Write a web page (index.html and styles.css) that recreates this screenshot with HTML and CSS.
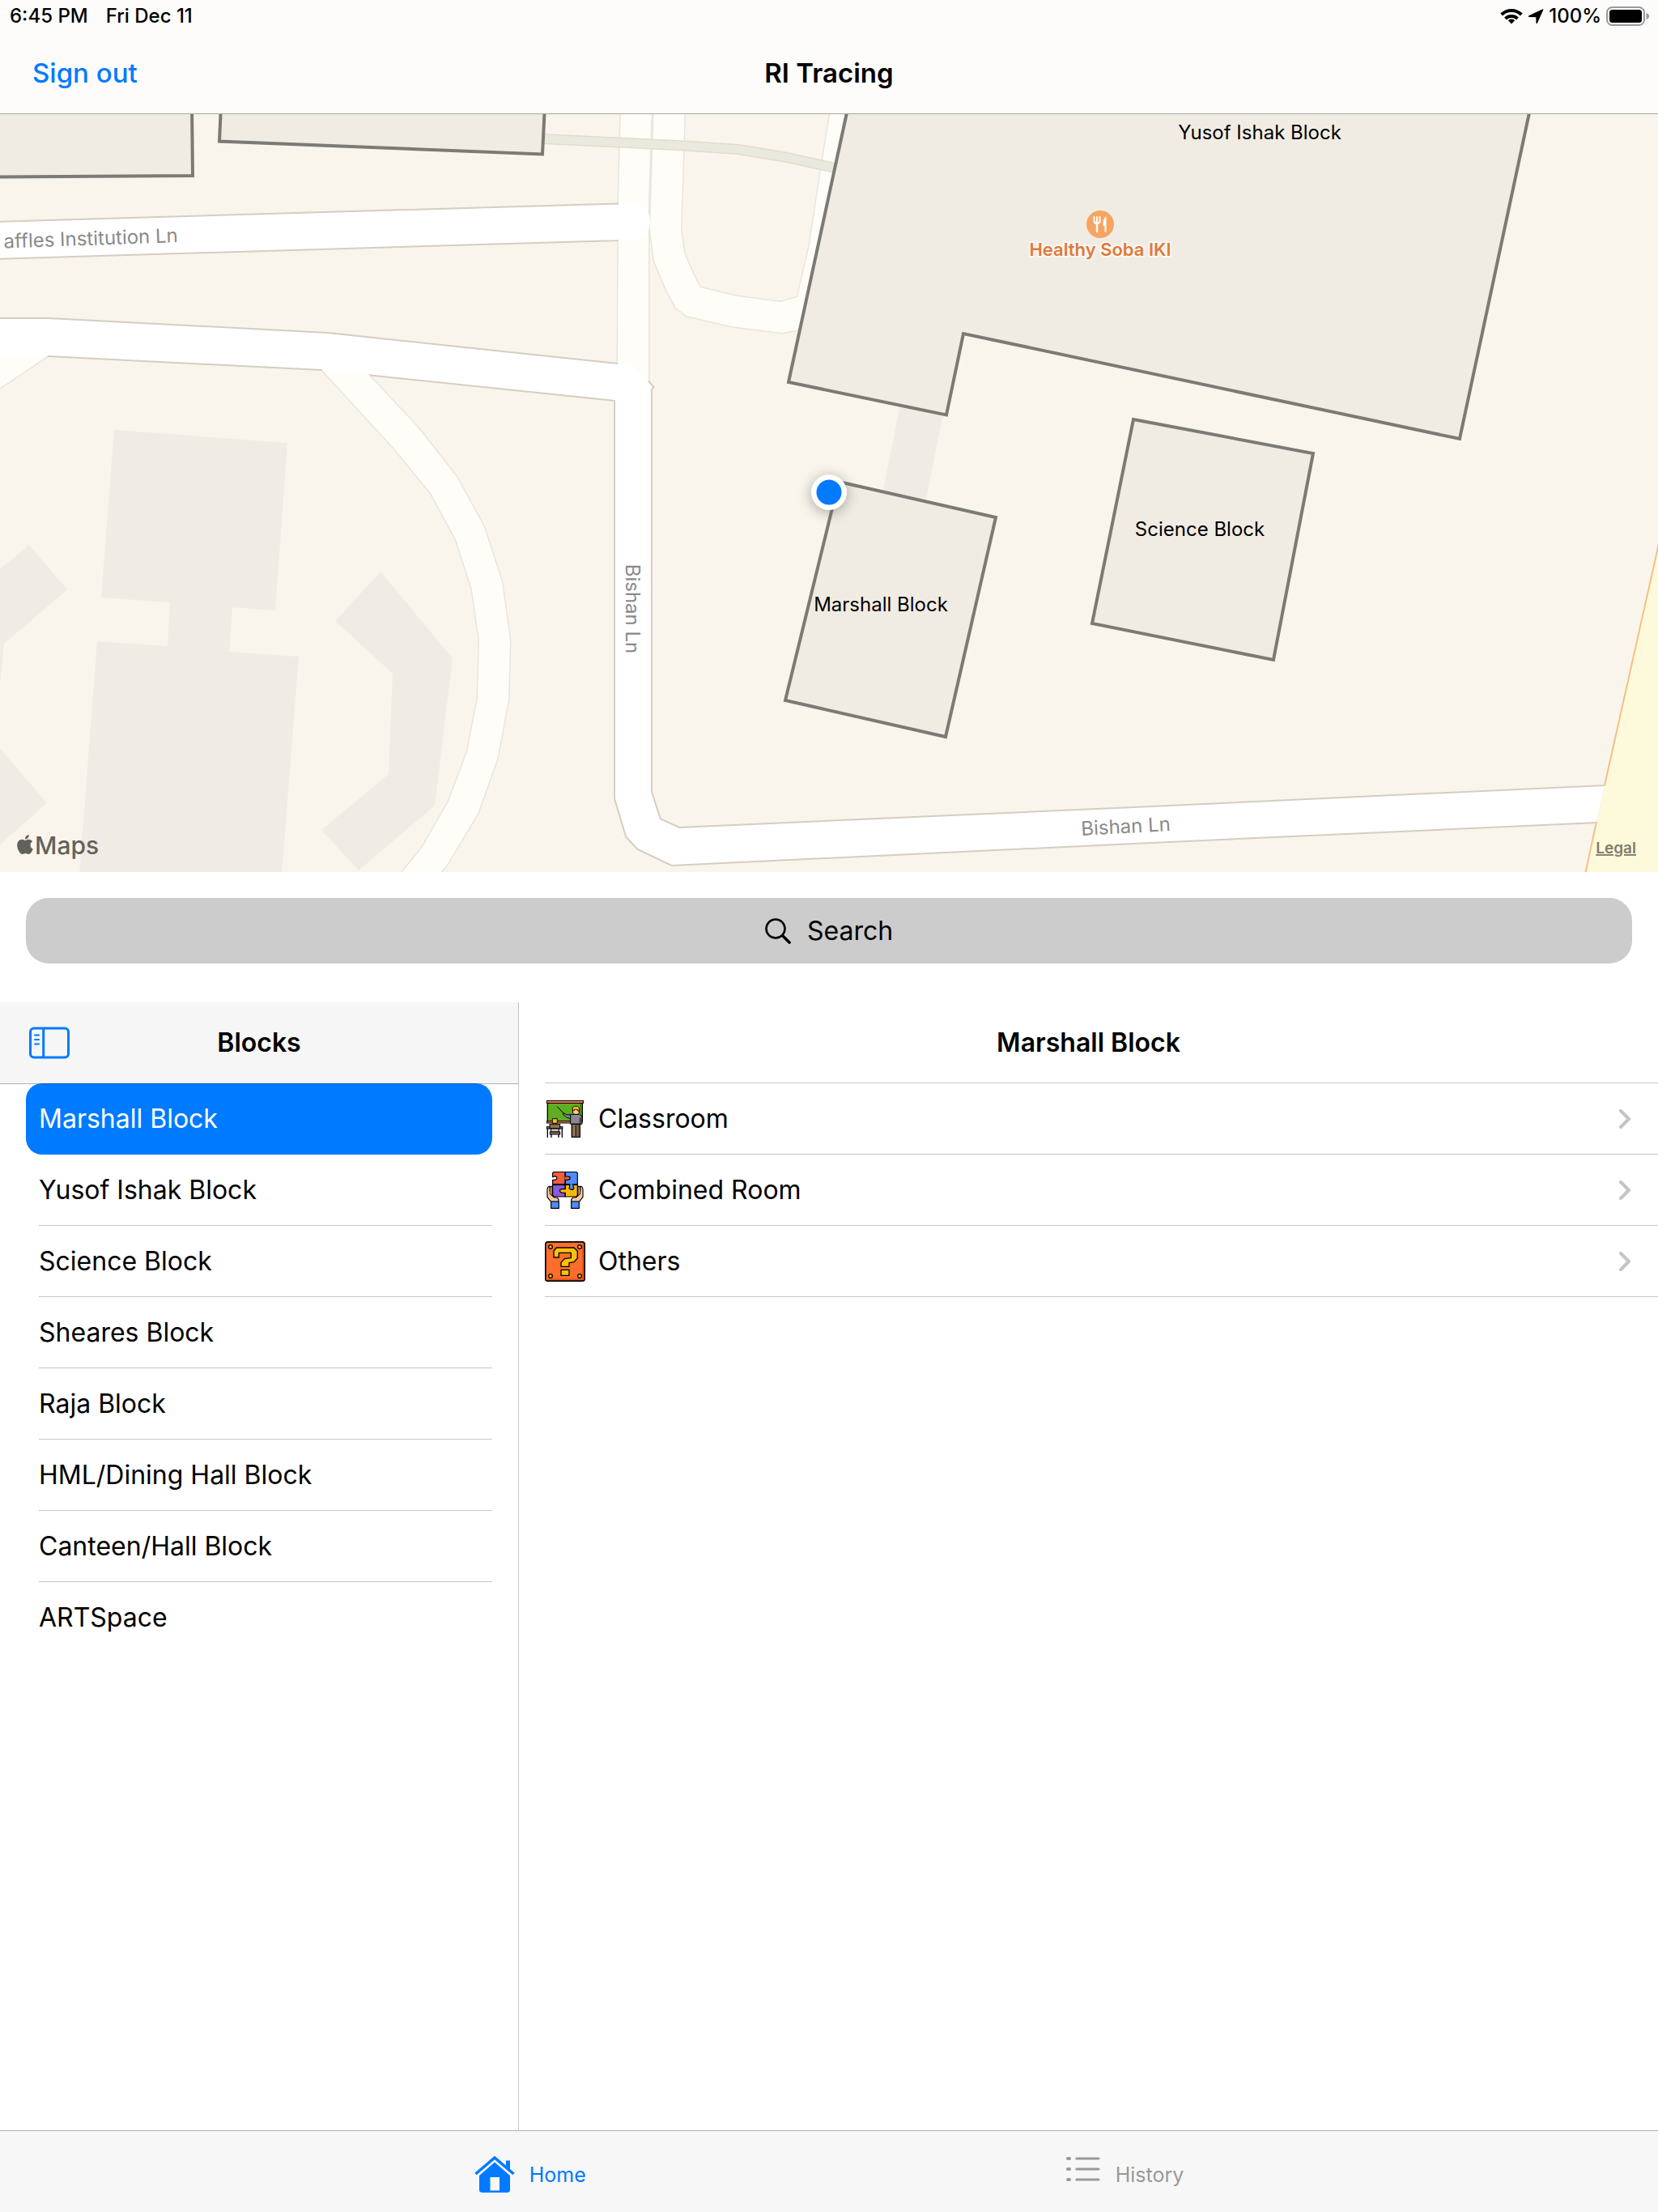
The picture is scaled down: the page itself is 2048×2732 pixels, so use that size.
FILE: index.html
```html
<!DOCTYPE html>
<html lang="en">
<head>
<meta charset="utf-8">
<meta name="viewport" content="width=device-width, initial-scale=1">
<title>RI Tracing</title>
<link rel="stylesheet" href="styles.css">
</head>
<body>
<header class="topbar">
  <div class="status">
    <div class="status-left"><span>6:45 PM</span><span>Fri Dec 11</span></div>
    <div class="status-right">
      <svg class="wifi" viewBox="0 0 28 20" aria-hidden="true"><g fill="none" stroke="#000" stroke-width="4"><path d="M1.700 8A17.500 17.500 0 0 1 26.300 8"/><path d="M6.500 13A11 11 0 0 1 21.500 13"/></g><path d="M14 19.500L9.800 15.300A6 6 0 0 1 18.200 15.300Z"/></svg>
      <svg class="locate" viewBox="0 0 20 19" aria-hidden="true"><path d="M18.600.300Q19.800 0 19.300 1.300L12 17.600Q10.900 19 10.400 17.300L10.300 10.200L2 10Q0 9.500 1.600 8.300Z"/></svg>
      <span>100%</span>
      <svg class="battery" viewBox="0 0 54 24" aria-hidden="true"><rect x="1" y="1" width="46" height="22" rx="6.500" fill="none" stroke="#999" stroke-width="2"/><rect x="4" y="4" width="40" height="16" rx="3.500"/><path d="M49.500 8Q53 9 53 12T49.500 16Z" fill="#999"/></svg>
    </div>
  </div>
  <nav class="navbar">
    <button class="signout" type="button">Sign out</button>
    <h1>RI Tracing</h1>
  </nav>
</header>

<main>
  <svg class="map" viewBox="0 141 2048 936" role="img" aria-label="Campus map">
    <defs>
      <path id="lane-top" d="M-10 275L763 252.500V296L-10 319Z"/>
      <path id="lane-main" d="M-10 394L60 394L405 412L763 450L783 453L802 473L806 478L804 481V978L815 1012L839 1023L1400 998L1982 971L1972 1015L1400 1041L830 1068L788 1048L774 1033L760 986V494L453 462L397 456L60 439L-10 437Z"/>
      <path id="drive-mid" d="M767 130L764 250L763 458V480H801V250L805 130Z"/>
      <path id="drive-loop" d="M808 130L803 283L808 322L823 358L835 380L848 390L903 403L966 411L987 407L1046 130L1027 130L1014 210L1000 303L985 367L964 373L910 366L865 355L857 340L845 312L841 283L846 130Z"/>
      <path id="drive-ring" d="M393 450L397 456L487 554L532 609L563 666L583 728L592 791L590 862L577 929L554 990L522 1046L489 1087H537L552 1068L590 1005L614 938L628 865L630 791L620 719L598 651L564 589L517 529L449 456Z"/>
      <path id="drive-west" d="M-10 430H60V439L-10 486Z"/>
      <filter id="soft" x="-50%" y="-50%" width="200%" height="200%"><feGaussianBlur stdDeviation="8"/></filter>
    </defs>
    <rect y="141" width="2048" height="936" fill="#f9f5ed"/>
    <g class="structure">
      <path d="M141 531L355 547L340 754L287 750L283 805L369 811L348 1080H98L120 792L207 798L210 744L125 738Z"/>
      <path d="M0 703L36 673L83 728L5 795L0 845Z"/>
      <path d="M0 924L58 992L0 1043Z"/>
      <path d="M470 706L559 813L537 995L443 1075L397 1025L480 956L485 832L414 767Z"/>
      <path d="M1113 495L1166 505L1143 622L1089 615Z"/>
    </g>
    <g class="drive-edge"><use href="#drive-mid"/><use href="#drive-loop"/><use href="#drive-ring"/><use href="#drive-west"/></g>
    <g class="lane-edge"><use href="#lane-top"/><use href="#lane-main"/></g>
    <g class="drive"><use href="#drive-mid"/><use href="#drive-loop"/><use href="#drive-ring"/><use href="#drive-west"/></g>
    <g class="lane"><use href="#lane-top"/><use href="#lane-main"/><path d="M750 253L780 253Q803 254 803 274T780 296L750 296.500Z"/></g>
    <g fill="none" stroke-linejoin="round"><path d="M670 171.500L766 176L845 180L912 184.500L970 194L1034 208" stroke="#e2dccb" stroke-width="13"/><path d="M670 171.500L766 176L845 180L912 184.500L970 194L1034 208" stroke="#e9eadd" stroke-width="10"/></g>
    <path d="M2050 670L1982 970L1972 1015L1958 1080H2050Z" fill="#fcfadb"/>
    <path d="M2050 667L1982 970M1972 1015L1958 1080" fill="none" stroke="#f6bf86" stroke-width="2"/>
    <g class="block">
      <path d="M-10 130H237L238 217L-10 218.500Z"/>
      <path d="M273 130L271 174.500L670 190.500L673 130Z"/>
      <path d="M1048 130L974 472L1169 512.500L1190 412L1803 542L1891 130Z"/>
      <path d="M1036 595L1230 639L1168 910L970 865Z"/>
      <path d="M1400 518L1622 560L1573 815L1349 770Z"/>
    </g>
    <text class="block-name" x="1556" y="172">Yusof Ishak Block</text>
    <text class="block-name" x="1088" y="755">Marshall Block</text>
    <text class="block-name" x="1482" y="662">Science Block</text>
    <text class="road-name" x="220" y="299" text-anchor="end" transform="rotate(-2 220 299)">affles Institution Ln</text>
    <text class="road-name" x="773" y="752" text-anchor="middle" transform="rotate(90 773 752)">Bishan Ln</text>
    <text class="road-name" x="1391" y="1029" text-anchor="middle" transform="rotate(-3 1391 1029)">Bishan Ln</text>
    <circle cx="1359" cy="277" r="17" fill="#f7a463"/>
    <g fill="none" stroke="#fff" stroke-linecap="round"><path d="M1351.500 268V273Q1351.500 276 1355 276T1358.500 273V268M1355 268V275" stroke-width="2"/><path d="M1355 276V286" stroke-width="2.500"/></g>
    <path d="M1366.500 267V286Q1366.500 287 1365.500 287T1364.500 286V279H1362.500Q1362 270 1366.500 267Z" fill="#fff"/>
    <text class="place-name" x="1359" y="316">Healthy Soba IKI</text>
    <circle cx="1024" cy="611" r="23" fill="#5a5848" opacity=".45" filter="url(#soft)"/>
    <circle cx="1024" cy="608" r="22" fill="#fff"/>
    <circle cx="1024" cy="608" r="15.500" fill="#007aff"/>
    <path transform="translate(19 1031)" fill="#63615c" d="M12.152 6.896c-.948 0-2.415-1.078-3.960-1.040-2.040.027-3.910 1.183-4.961 3.014-2.117 3.675-.546 9.103 1.519 12.090 1.013 1.454 2.208 3.090 3.792 3.039 1.520-.065 2.090-.987 3.935-.987 1.831 0 2.350.987 3.960.948 1.637-.026 2.676-1.480 3.676-2.948 1.156-1.688 1.636-3.325 1.662-3.415-.039-.013-3.182-1.221-3.220-4.857-.026-3.040 2.480-4.494 2.597-4.559-1.429-2.090-3.623-2.324-4.390-2.376-2-.156-3.675 1.090-4.610 1.090zM15.530 3.830c.843-1.012 1.400-2.427 1.245-3.830-1.207.052-2.662.805-3.532 1.818-.780.896-1.454 2.338-1.273 3.714 1.338.104 2.715-.688 3.559-1.701"/>
    <text class="brand" x="43" y="1055">Maps</text>
    <a href="#legal"><text class="legal" x="2021" y="1054">Legal</text></a>
  </svg>

  <button class="search" type="button">
    <svg viewBox="0 0 32 32" aria-hidden="true"><circle cx="13" cy="13" r="11.500" fill="none" stroke="#000" stroke-width="2.600"/><path d="M21.500 21.500L30 30" stroke="#000" stroke-width="3.600" stroke-linecap="round"/></svg>
    <span>Search</span>
  </button>

  <div class="split">
    <aside class="sidebar">
      <div class="sidebar-head">
        <button class="toggle" type="button" aria-label="Toggle sidebar"><svg viewBox="0 0 50 40" aria-hidden="true"><g fill="none" stroke="#007aff" stroke-width="3"><rect x="1.500" y="2" width="47" height="36" rx="4.500"/><path d="M17.700 2V38"/></g><path d="M7 10.500H12M7 16H12M7 21.500H12" stroke="#007aff" stroke-width="2" stroke-linecap="round"/></svg></button>
        <h2>Blocks</h2>
      </div>
      <ul class="blocks">
        <li><a class="selected" href="#marshall" aria-current="true">Marshall Block</a></li>
        <li><a href="#yusof-ishak">Yusof Ishak Block</a></li>
        <li><a href="#science">Science Block</a></li>
        <li><a href="#sheares">Sheares Block</a></li>
        <li><a href="#raja">Raja Block</a></li>
        <li><a href="#hml">HML/Dining Hall Block</a></li>
        <li><a href="#canteen">Canteen/Hall Block</a></li>
        <li><a href="#artspace">ARTSpace</a></li>
      </ul>
    </aside>
    <section class="detail">
      <h2>Marshall Block</h2>
      <ul class="rooms">
        <li><a href="#classroom">
          <svg class="room-icon" viewBox="-6 -6 150 150" aria-hidden="true">
            <rect x="4" y="8" width="129" height="72" fill="#5fad23" stroke="#000" stroke-width="4"/>
            <path d="M124 11H131V78H124Z" fill="#3f8117"/>
            <rect x="1.500" y="1.500" width="135" height="9" fill="#f9705a" stroke="#000" stroke-width="3"/>
            <rect x="1.500" y="77" width="94" height="7" fill="#f9705a" stroke="#000" stroke-width="3"/>
            <path d="M40 23L62 47" stroke="#000" stroke-width="3"/>
            <path d="M62 46L74 53L90 54V68L76 64L63 54Z" fill="#8a8795" stroke="#000" stroke-width="3"/>
            <path d="M89 52H122L132 60V88H89Z" fill="#8a8795" stroke="#000" stroke-width="3"/>
            <path d="M122 64V87H132V64Z" fill="#45434d"/>
            <path d="M94 88H124V136H94Z" fill="#8f7253" stroke="#000" stroke-width="4"/><path d="M115 90H122V134H115Z" fill="#665039"/><path d="M109 92V134" stroke="#000" stroke-width="3"/>
            <path d="M97 30H121V46L115 52H104L98 46Z" fill="#fecb98" stroke="#000" stroke-width="3"/>
            <path d="M97 38V26L103 22H116L121 28V39H115V34H103V38Z" fill="#fdbf11" stroke="#000" stroke-width="2.500"/>
            <path d="M4 138V104M58 138V104M18 138V120M45 138V120" stroke="#000" stroke-width="4"/>
            <rect x="1.500" y="98" width="58" height="7" fill="#8f7253" stroke="#000" stroke-width="3"/>
            <rect x="12" y="89" width="38" height="15" fill="#8f7253" stroke="#000" stroke-width="3"/>
            <path d="M22 68H40V85H22Z" fill="#fdbf11" stroke="#000" stroke-width="3"/>
            <rect x="17" y="105" width="29" height="12" fill="#c6c4cc" stroke="#000" stroke-width="3"/>
            <rect x="13" y="117" width="37" height="9" fill="#8f7253" stroke="#000" stroke-width="3"/>
          </svg>
          <span>Classroom</span>
          <svg class="chevron" viewBox="0 0 14 24" aria-hidden="true"><path d="M2 2L12 12L2 22"/></svg>
        </a></li>
        <li><a href="#combined-room">
          <svg class="room-icon" viewBox="-6 -6 150 150" aria-hidden="true">
            <g stroke="#000" stroke-width="3.500" stroke-linejoin="round">
              <path d="M6 57L13 54L14 83L29 96H40L45 104V112H17L3 94V65Z" fill="#fecba0"/>
              <path d="M132 57L125 54L124 83L109 96H98L92 104V112H121L135 94V65Z" fill="#fecba0"/>
              <path d="M13 75V58L21 54V83L29 92M125 75V58L117 54V83L109 92" fill="#fecba0"/>
              <rect x="17" y="111" width="29" height="25" fill="#4f8bff"/><rect x="92" y="111" width="29" height="25" fill="#4f8bff"/>
              <path d="M23 5L27 1.500H69V47H23V31H32L38 28V20L32 17L23 20Z" fill="#f05f3d"/>
              <path d="M70 1.500H111L115 5V47H70Z" fill="#4f8bff"/>
              <path d="M23 49H69V93H29L23 88Z" fill="#8a5be0"/>
              <path d="M70 49H115V88L110 93H70V79L57 79L50 74V67L56 65H70Z" fill="#fbb906"/>
              <path d="M68 18H77L87 20V28L78 31H68" fill="#f05f3d"/>
              <path d="M86 46V55L84 62L92 67H98L102 61L99 55V46" fill="#4f8bff"/>
            </g>
          </svg>
          <span>Combined Room</span>
          <svg class="chevron" viewBox="0 0 14 24" aria-hidden="true"><path d="M2 2L12 12L2 22"/></svg>
        </a></li>
        <li><a href="#others">
          <svg class="room-icon" viewBox="0 0 150 150" aria-hidden="true">
            <rect x="2.500" y="2.500" width="145" height="145" rx="9" fill="#ff6d2c" stroke="#000" stroke-width="5"/>
            <path d="M141 10V141H12" fill="none" stroke="#d9501b" stroke-width="5"/>
            <g fill="#fdbf11" stroke="#000" stroke-width="4"><circle cx="21" cy="21" r="7"/><circle cx="129" cy="21" r="7"/><circle cx="21" cy="129" r="7"/><circle cx="129" cy="129" r="7"/></g>
            <path d="M33 60V36L43 24H108L121 37V63L108 77L90 80V94H60V79L73 65L97 62V43H52V60Z" fill="#fdc10a" stroke="#000" stroke-width="4" stroke-linejoin="round"/>
            <path d="M60 106H90V127H60Z" fill="#fdc10a" stroke="#000" stroke-width="4" stroke-linejoin="round"/>
          </svg>
          <span>Others</span>
          <svg class="chevron" viewBox="0 0 14 24" aria-hidden="true"><path d="M2 2L12 12L2 22"/></svg>
        </a></li>
      </ul>
    </section>
  </div>
</main>

<nav class="tabs">
  <a class="active" href="#home">
    <svg class="home" viewBox="0 0 50 46" aria-hidden="true"><path d="M1.500 22L25 2L48.500 22" fill="none" stroke="#007aff" stroke-width="3.600"/><path d="M39 5.500H44V17L39 12.500Z" fill="#007aff"/><path fill="#007aff" fill-rule="evenodd" d="M25 7.500L44 24V42Q44 45 40 45H10Q6 45 6 42V24ZM19.500 26V42.500H31V26Z"/></svg>
    <span>Home</span>
  </a>
  <a href="#history">
    <svg class="list" viewBox="0 0 44 46" aria-hidden="true"><path d="M14 3H41M14 16H41M14 29H41" stroke="#999" stroke-width="3.200" stroke-linecap="round"/><path d="M3 3H5M3 16H5M3 29H5" stroke="#999" stroke-width="4" stroke-linecap="round"/></svg>
    <span>History</span>
  </a>
</nav>
</body>
</html>
```
FILE: styles.css
```css
*, *::before, *::after { box-sizing: border-box; }

body {
  margin: 0;
  min-height: 100vh;
  display: flex;
  flex-direction: column;
  background: #fff;
  color: #000;
  font-family: Inter, "Liberation Sans", sans-serif;
  font-size: 32px;
  line-height: 40px;
}

h1, h2 { margin: 0; font-size: 32px; font-weight: 600; line-height: 40px; }
ul { margin: 0; padding: 0; list-style: none; }
a { color: inherit; text-decoration: none; }
button { border: 0; padding: 0; background: none; color: inherit; font: inherit; cursor: pointer; }
svg { display: block; flex: none; }

/* Status and navigation bars */
.topbar { background: #fdfcfa; border-bottom: 1px solid #a9a7a3; }
.status {
  display: flex;
  justify-content: space-between;
  height: 40px;
  padding: 0 10px 0 12px;
  font-size: 24px;
  font-weight: 500;
}
.status-left { display: flex; gap: 22px; }
.status-right { display: flex; align-items: center; gap: 6px; }
.wifi { width: 28px; height: 20px; }
.locate { width: 20px; height: 19px; }
.battery { width: 54px; height: 24px; }
.navbar {
  display: grid;
  grid-template-columns: 1fr auto 1fr;
  align-items: center;
  height: 100px;
  padding: 0 40px;
}
.navbar h1, .signout { font-size: 33px; }
.signout { justify-self: start; color: #007aff; font-weight: 500; }

main { flex: 1; display: flex; flex-direction: column; }

/* Map */
.map { width: 100%; height: auto; }
.structure { fill: #f0ebe4; }
.drive { fill: #fffdf8; }
.drive-edge { fill: none; stroke: #e9e5dc; stroke-width: 3px; }
.lane { fill: #fff; }
.lane-edge { fill: none; stroke: #d6ccc1; stroke-width: 4px; }
.block { fill: #f0ece4; stroke: #7c7a75; stroke-width: 4px; }
.block-name { font-size: 24px; text-anchor: middle; }
.road-name { font-size: 24px; fill: #8a8a8a; }
.place-name {
  font-size: 22px;
  font-weight: 600;
  text-anchor: middle;
  fill: #dd7a3c;
  stroke: #fbf7f2;
  stroke-width: 4px;
  paint-order: stroke;
}
.brand { font-size: 30px; font-weight: 500; fill: #63615c; }
.legal { font-size: 19px; font-weight: 600; text-anchor: end; fill: #7f7d6e; text-decoration: underline; }

/* Search */
.search {
  display: flex;
  align-items: center;
  justify-content: center;
  gap: 20px;
  height: 81px;
  margin: 32px 32px 48px;
  border-radius: 28px;
  background: #ccc;
}
.search svg { width: 32px; height: 32px; }

/* Split view */
.split { flex: 1; display: flex; }
.sidebar { width: 641px; border-right: 1px solid #c6c6c8; }
.sidebar-head {
  position: relative;
  z-index: 1;
  display: grid;
  grid-template-columns: 1fr auto 1fr;
  align-items: center;
  height: 101px;
  margin-bottom: -1px;
  padding: 0 36px;
  background: #f6f6f6;
  background-clip: padding-box;
  border-bottom: 1px solid rgba(0, 0, 0, 0.3);
}
.toggle { justify-self: start; }
.toggle svg { width: 50px; height: 40px; }
.blocks { padding: 0 32px; }
.blocks a { display: flex; align-items: center; height: 88px; padding-left: 16px; }
.blocks li + li a { position: relative; }
.blocks li:not(:first-child):not(:last-child) a::after {
  content: "";
  position: absolute;
  left: 16px;
  right: 0;
  bottom: 0;
  height: 1px;
  background: #c6c6c8;
}
.blocks .selected { border-radius: 20px; background: #007aff; color: #fff; }
.detail { flex: 1; }
.detail h2 { padding: 30px 0 29px; text-align: center; }
.rooms { margin-left: 32px; border-top: 1px solid #c6c6c8; }
.rooms a {
  display: flex;
  align-items: center;
  gap: 16px;
  height: 88px;
  padding-right: 34px;
  border-bottom: 1px solid #c6c6c8;
}
.room-icon { width: 50px; height: 50px; }
.chevron { width: 14px; height: 24px; margin-left: auto; fill: none; stroke: #c4c4c7; stroke-width: 4px; stroke-linecap: round; stroke-linejoin: round; }

/* Tab bar */
.tabs {
  display: flex;
  justify-content: center;
  gap: 592px;
  height: 101px;
  border-top: 1px solid #b2b2b2;
  background: #f7f7f7;
  color: #999;
  font-size: 25px;
}
.tabs a { display: flex; align-items: center; gap: 18px; padding-top: 8px; }
.tabs .active { color: #007aff; }
.home { width: 50px; height: 46px; }
.list { width: 44px; height: 46px; }
```
